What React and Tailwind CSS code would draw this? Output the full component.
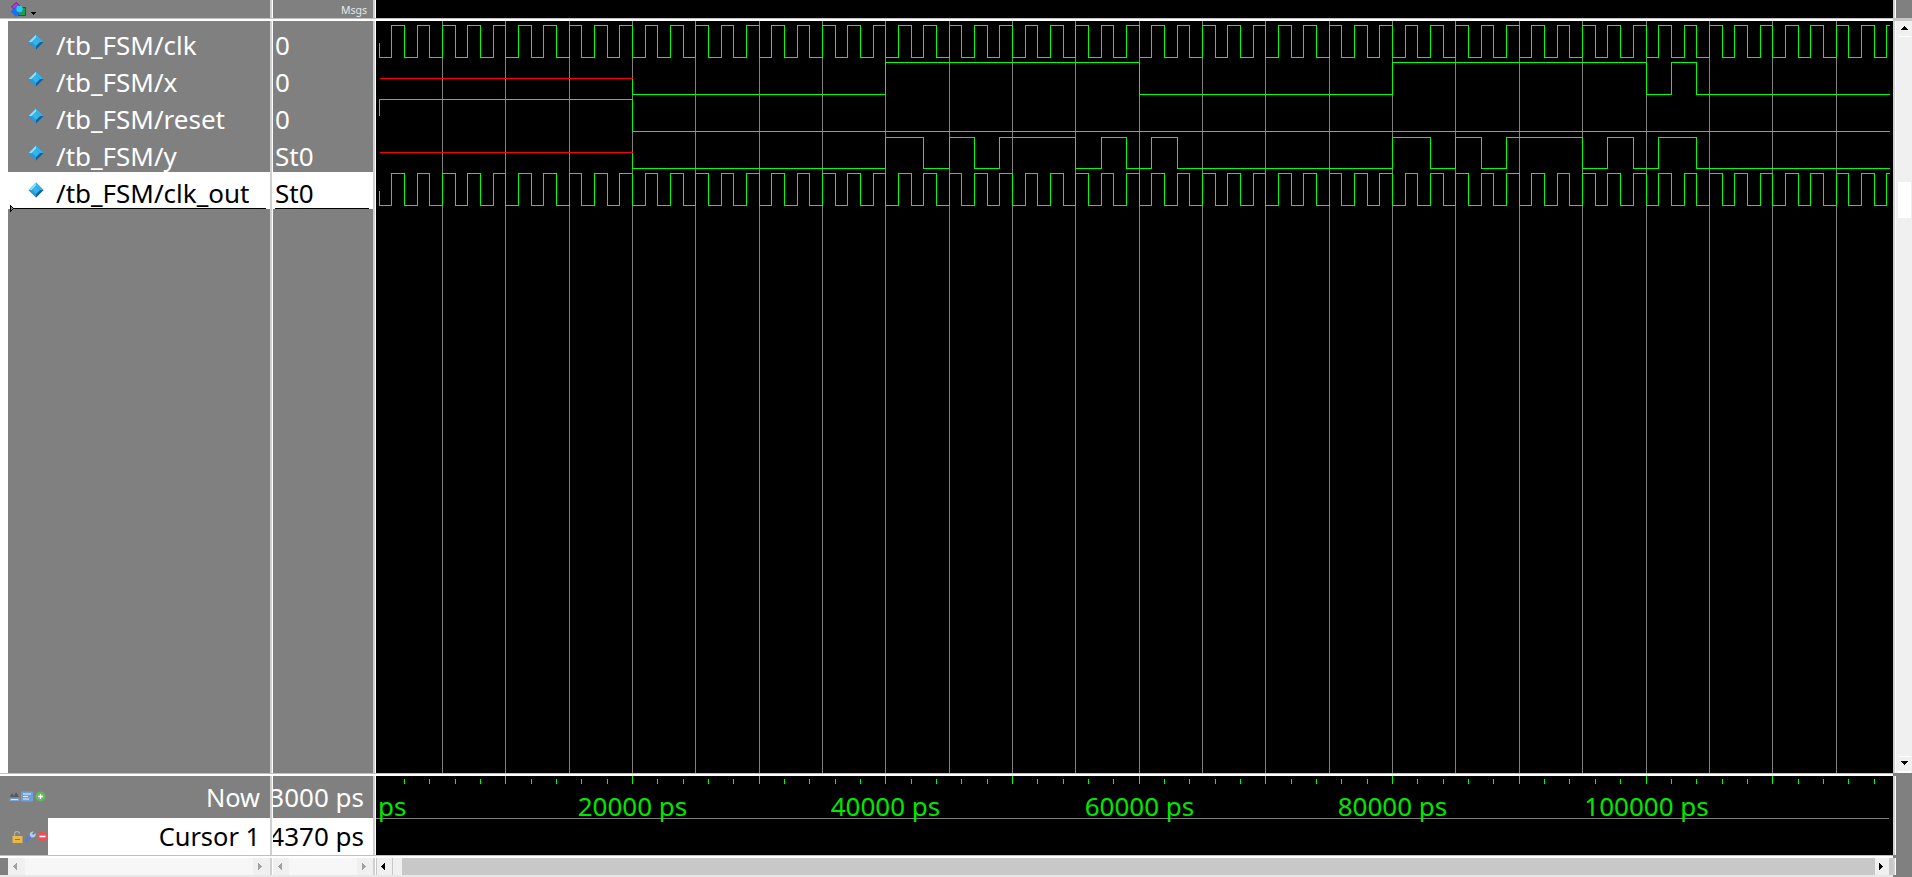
const X = (t) => Math.floor(379 + 12.67 * t) + 0.5;
const END = 1889.5;

function wave(levels, start, hi, lo) {
  const pts = [];
  let y = start;
  for (const [t, v] of levels) {
    const x = X(t);
    const ny = v ? hi : lo;
    pts.push(`${x},${y}`);
    pts.push(`${x},${ny}`);
    y = ny;
  }
  pts.push(`${END},${y}`);
  return pts.join(" ");
}

const clockLevels = () => {
  const l = [[0, 0]];
  for (let t = 1; t <= 119; t++) l.push([t, t % 2 === 1 ? 1 : 0]);
  return l;
};

const xLevels = [[20, 0], [40, 1], [60, 0], [80, 1], [100, 0], [102, 1], [104, 0]];
const yLevels = [
  [20, 0], [40, 1], [43, 0], [45, 1], [47, 0], [49, 1], [55, 0], [57, 1], [59, 0], [61, 1], [63, 0],
  [80, 1], [83, 0], [85, 1], [87, 0], [89, 1], [95, 0], [97, 1], [99, 0], [101, 1], [104, 0],
];

function Waves() {
  const grid = [];
  for (let i = 1; i <= 23; i++) grid.push(X(i * 5));
  const G = "#00ff00";
  return (
    <svg width="1517" height="752" viewBox="376 21 1517 752" className="block" shapeRendering="crispEdges" fill="none">
      {grid.map((x) => (
        <line key={x} x1={x} x2={x} y1="21" y2="773" stroke="#808080" />
      ))}
      <polyline points={wave(clockLevels(), 42.5, 25.5, 57.5)} stroke={G} />
      <line x1="380" x2={X(20)} y1="78.5" y2="78.5" stroke="#ff0000" />
      <polyline points={wave(xLevels, 78.5, 62.5, 94.5)} stroke={G} />
      <polyline points={`${X(0)},115.5 ${X(0)},99.5 ${X(20)},99.5 ${X(20)},131.5 ${END},131.5`} stroke={G} />
      <line x1="380" x2={X(20)} y1="152.5" y2="152.5" stroke="#ff0000" />
      <polyline points={wave(yLevels, 152.5, 137.5, 168.5)} stroke={G} />
      <polyline points={wave(clockLevels(), 190.5, 173.5, 205.5)} stroke={G} />
    </svg>
  );
}

function Ruler() {
  const ticks = [];
  for (let t = 2; t <= 118; t += 2) ticks.push(t);
  const labels = [20, 40, 60, 80, 100];
  return (
    <svg width="1517" height="79" viewBox="376 776 1517 79" className="block" style={{ fontFamily: '"Noto Sans", sans-serif' }}>
      {ticks.map((t) => (
        <line
          key={t}
          x1={X(t)}
          x2={X(t)}
          y1={t % 10 === 0 ? 776 : 779}
          y2="784"
          stroke="#00ff00"
          shapeRendering="crispEdges"
        />
      ))}
      <line x1="376" x2="1889" y1="818.5" y2="818.5" stroke="#808080" shapeRendering="crispEdges" />
      <text x="378" y="816" fontSize="26" fill="#00e800">ps</text>
      {labels.map((t) => (
        <text key={t} x={X(t)} y="816" fontSize="26" fill="#00e800" textAnchor="middle">
          {t * 1000} ps
        </text>
      ))}
    </svg>
  );
}

function Diamond() {
  return (
    <svg width="16" height="16" viewBox="0 0 16 16" className="block shrink-0">
      <path d="M8 0.5 15.5 8 8 15.5 0.5 8Z" fill="#1f7fc0" />
      <path d="M8 0.5 0.5 8 4 8 8 4Z" fill="#8fdcf5" />
      <path d="M8 0.5 15.5 8 12 8 8 4Z" fill="#35b4e8" />
      <path d="M0.5 8 8 15.5 8 12 4 8Z" fill="#2a9bd8" />
      <path d="M15.5 8 8 15.5 8 12 12 8Z" fill="#15609c" />
      <path d="M8 4 12 8 8 12 4 8Z" fill="#2fb6ee" />
    </svg>
  );
}

function Row({ name, selected }) {
  return (
    <div className={`h-[37px] flex items-start pl-[20px] relative ${selected ? "bg-white text-black" : "text-white"}`}>
      <div className="pt-[10px]">
        <Diamond />
      </div>
      <span className="ml-[12px] text-[26px] leading-[43px] whitespace-nowrap">{name}</span>
      {selected && <div className="absolute left-[2px] right-[4px] bottom-0 h-px bg-black" />}
      {selected && (
        <svg width="4" height="7" viewBox="0 0 4 7" className="absolute left-[2px] bottom-[-3px]" shapeRendering="crispEdges">
          <path d="M0.5 0.5V6.5L3.5 3.5Z" fill="#808080" stroke="#000" />
        </svg>
      )}
    </div>
  );
}

function Val({ v, selected }) {
  return (
    <div className={`h-[37px] pl-[2px] text-[26px] leading-[43px] relative ${selected ? "bg-white text-black" : "text-white"}`}>
      {v}
      {selected && <div className="absolute left-[2px] right-[4px] bottom-0 h-px bg-black" />}
    </div>
  );
}

const Tri = ({ d }) => {
  const p = {
    l: "M1 4.5 5 0.5 5 8.5Z",
    r: "M5 4.5 1 0.5 1 8.5Z",
    u: "M4.5 1 8.5 5 0.5 5Z",
    d: "M4.5 5 8.5 1 0.5 1Z",
  }[d];
  return (
    <svg width="9" height="9" viewBox="0 0 9 9" className="block" shapeRendering="crispEdges">
      <path d={p} fill="currentColor" />
    </svg>
  );
};

const Btn = ({ d, className = "", color = "text-[#a0a0a0]" }) => (
  <div className={`flex items-center justify-center bg-[#f0f0f0] ${color} ${className}`}>
    <Tri d={d} />
  </div>
);

const VSep = () => <div className="w-[3px] shrink-0 bg-[#d0d0d0] border-r border-white" />;

function TopIcon() {
  return (
    <div className="flex items-center gap-[4px] pl-[10px]">
      <svg width="16" height="15" viewBox="0 0 16 15" className="block">
        <path d="M6 0.5 11 5 6 9 1.5 5Z" fill="#b040d0" stroke="#7a12a0" />
        <rect x="8.5" y="5.5" width="7" height="8" fill="#1e9e4a" stroke="#0a6a2a" />
        <path d="M6 4 11.5 9.5 6 15 0.5 9.5Z" fill="#1f6fe8" />
        <circle cx="9.5" cy="7" r="3.2" fill="#22d0ee" />
      </svg>
      <svg width="6" height="3" viewBox="0 0 6 3" className="block mt-[8px]" shapeRendering="crispEdges">
        <path d="M0 0H6L3 3Z" fill="#000" />
      </svg>
    </div>
  );
}

function NowIcons() {
  return (
    <div className="flex items-center gap-[1px] mb-[1px]">
      <svg width="11" height="11" viewBox="0 0 11 11" className="block">
        <path d="M1 6 3 2 5 5 7 1 10 6Z" fill="#555a60" />
        <path d="M0.5 7.5H10.5V10H0.5Z" fill="#7aa8d8" />
        <path d="M2 8.5H9" stroke="#d8e8f8" />
      </svg>
      <svg width="12" height="11" viewBox="0 0 12 11" className="block">
        <rect x="0" y="0.5" width="12" height="10" rx="1" fill="#6f9fd8" />
        <path d="M2 3H10M2 5.5H7M2 8H8" stroke="#e8f0fa" />
      </svg>
      <svg width="11" height="11" viewBox="0 0 11 11" className="block ml-[1px]">
        <circle cx="5.5" cy="5.5" r="5" fill="#62b85f" />
        <path d="M5.5 3V8M3 5.5H8" stroke="#fff" strokeWidth="1.4" />
      </svg>
    </div>
  );
}

function CursorIcons() {
  return (
    <div className="flex items-center gap-[1px]">
      <svg width="11" height="12" viewBox="0 0 11 12" className="block">
        <path d="M2.5 5V3A2.5 2.5 0 0 1 7.5 3" fill="none" stroke="#b0b0a0" strokeWidth="1.2" />
        <rect x="0.5" y="5" width="10" height="7" fill="#e8b94a" />
        <rect x="3" y="8" width="5" height="1" fill="#a87a18" />
      </svg>
      <svg width="12" height="12" viewBox="0 0 12 12" className="block">
        <path d="M1.5 10.5 7 5" fill="none" stroke="#4f7fd0" strokeWidth="2.8" />
        <path d="M6 5A3.4 3.4 0 0 1 10 0.5L8 2.5 9.5 4 11.5 2A3.4 3.4 0 0 1 7.5 6.5Z" fill="#b4cdee" />
      </svg>
      <svg width="11" height="11" viewBox="0 0 11 11" className="block">
        <circle cx="5.5" cy="5.5" r="5" fill="#e0555a" />
        <path d="M2.5 5.5H8.5" stroke="#fff" strokeWidth="1.6" />
      </svg>
    </div>
  );
}

export default function App() {
  const rows = [
    ["/tb_FSM/clk", "0"],
    ["/tb_FSM/x", "0"],
    ["/tb_FSM/reset", "0"],
    ["/tb_FSM/y", "St0"],
    ["/tb_FSM/clk_out", "St0"],
  ];
  return (
    <div
      className="w-[1912px] h-[877px] overflow-hidden flex flex-col bg-[#808080]"
      style={{ fontFamily: '"Noto Sans", "Open Sans", sans-serif' }}
    >
      {/* header */}
      <div className="h-[18px] flex shrink-0">
        <div className="w-[270px] flex items-center"><TopIcon /></div>
        <VSep />
        <div className="w-[100px] text-right pr-[6px] text-[10.5px] leading-[20px] text-[#e8e8e8]">Msgs</div>
        <VSep />
        <div className="w-[1517px] bg-black" />
        <VSep />
        <div className="flex-1" />
      </div>
      <div className="h-[3px] shrink-0 flex">
        <div className="w-[1893px] bg-white border-t border-[#c0c0c0]" />
        <div className="flex-1 bg-[#c8c8c8]" />
      </div>

      {/* main */}
      <div className="h-[752px] flex shrink-0">
        <div className="w-[270px] flex">
          <div className="w-[8px] bg-white" />
          <div className="flex-1 pt-[3px] min-w-0">
            {rows.map(([n], i) => (
              <Row key={n} name={n} selected={i === 4} />
            ))}
          </div>
        </div>
        <VSep />
        <div className="w-[100px] pt-[3px]">
          {rows.map(([n, v], i) => (
            <Val key={n} v={v} selected={i === 4} />
          ))}
        </div>
        <VSep />
        <div className="w-[1517px] bg-black"><Waves /></div>
        <div className="w-[2px] bg-[#d0d0d0]" />
        <div className="flex-1 flex flex-col bg-[#f0f0f0] pl-[2px] pr-[1px] border-l border-white">
          <div className="h-[1px]" />
          <Btn d="u" color="text-black" className="h-[15px] border-b border-white" />
          <div className="h-[145px]" />
          <div className="h-[36px] bg-white" />
          <div className="flex-1" />
          <Btn d="d" color="text-black" className="h-[15px] border-t border-white" />
          <div className="h-[2px] bg-white" />
        </div>
      </div>
      <div className="h-[3px] shrink-0 flex">
        <div className="w-[1893px] bg-white border-t border-[#c0c0c0]" />
        <div className="flex-1 bg-[#808080]" />
      </div>

      {/* now / cursor */}
      <div className="h-[79px] flex shrink-0">
        <div className="w-[270px] flex flex-col text-[25.4px] text-right">
          <div className="h-[42px] flex items-center pl-[9px] pr-[10px] text-white">
            <NowIcons />
            <span className="flex-1 leading-[42px]">Now</span>
          </div>
          <div className="h-[37px] flex">
            <div className="w-[48px] flex items-center pl-[12px]"><CursorIcons /></div>
            <div className="flex-1 bg-white text-black pr-[10px] leading-[36px] whitespace-nowrap">Cursor 1</div>
          </div>
        </div>
        <VSep />
        <div className="w-[100px] flex flex-col text-[26px] overflow-hidden">
          <div className="h-[42px] flex justify-end pr-[9px] text-white leading-[42px] whitespace-nowrap">3000 ps</div>
          <div className="h-[37px] flex justify-end pr-[9px] bg-white text-black leading-[36px] whitespace-nowrap">4370 ps</div>
        </div>
        <VSep />
        <div className="w-[1517px] bg-black"><Ruler /></div>
        <VSep />
        <div className="flex-1" />
      </div>
      <div className="h-[3px] shrink-0 flex">
        <div className="w-[1893px] bg-white border-t border-[#c0c0c0]" />
        <div className="flex-1 bg-[#808080]" />
      </div>

      {/* scrollbars */}
      <div className="h-[17px] flex shrink-0">
        <div className="w-[270px] flex pl-[8px]">
          <Btn d="l" className="w-[17px]" />
          <div className="flex-1 bg-[#f7f7f7]" />
          <Btn d="r" className="w-[17px]" />
        </div>
        <VSep />
        <div className="w-[100px] flex">
          <Btn d="l" className="w-[16px]" />
          <div className="flex-1 bg-[#f7f7f7]" />
          <Btn d="r" className="w-[16px]" />
        </div>
        <VSep />
        <div className="w-[1517px] flex bg-[#c8c8c8] pl-[1px] pr-[4px]">
          <Btn d="l" color="text-black" className="w-[15px]" />
          <div className="w-[10px] bg-[#f0f0f0] border-l border-[#c8c8c8]" />
          <div className="flex-1" />
          <Btn d="r" color="text-black" className="w-[14px]" />
        </div>
        <VSep />
        <div className="flex-1" />
      </div>
      <div className="flex-1 flex">
        <div className="w-[1893px] bg-[#e8e8e8]" />
      </div>
    </div>
  );
}
